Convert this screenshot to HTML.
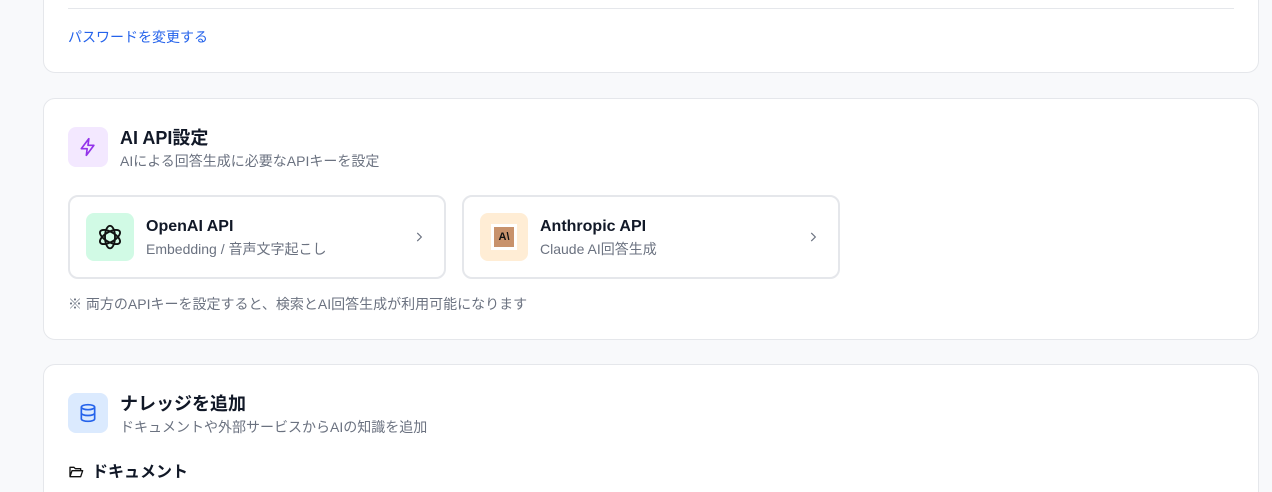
<!DOCTYPE html>
<html><head><meta charset="utf-8"><style>
*{box-sizing:border-box;margin:0;padding:0}
html,body{width:1272px;height:492px;overflow:hidden}
body{background:#f8f9fb;font-family:"Liberation Sans","Noto Sans CJK JP",sans-serif;color:#111827;position:relative}
.card{position:absolute;left:43px;width:1216px;background:#fff;border:1px solid #e5e7eb;border-radius:12px}
.abs{position:absolute}
.ibox{position:absolute;width:40px;height:40px;border-radius:8px;display:flex;align-items:center;justify-content:center}
.h{position:absolute;font-size:18px;font-weight:bold;line-height:22px}
.s{position:absolute;font-size:14px;color:#6b7280;line-height:17px}
.api{position:absolute;top:96px;width:378px;height:84px;border:2px solid #e5e7eb;border-radius:10px;background:#fff}
.api .ic{position:absolute;left:16px;top:16px;width:48px;height:48px;border-radius:8px;display:flex;align-items:center;justify-content:center}
.api .t{position:absolute;left:76px;top:20px;font-size:16px;font-weight:bold;line-height:20px}
.api .d{position:absolute;left:76px;top:44px;font-size:14px;color:#6b7280;line-height:17px}
.api .ch{position:absolute;right:18px;top:33px}
</style></head><body>
<div class="card" style="top:-40px;height:113px">
 <div class="abs" style="left:24px;top:47px;width:1166px;height:1px;background:#e5e7eb"></div>
 <div class="abs" style="left:24px;top:68px;font-size:14px;color:#2563eb;line-height:17px">パスワードを変更する</div>
</div>
<div class="card" style="top:98px;height:242px">
 <div class="ibox" style="left:24px;top:28px;background:#f3e8ff"><svg width="20" height="20" viewBox="0 0 24 24" fill="none" stroke="#9333ea" stroke-width="2" stroke-linejoin="round" stroke-linecap="round"><path d="M13 2 4 14h7l-1 8 9-12h-7z"/></svg></div>
 <div class="h" style="left:76px;top:28px">AI API設定</div>
 <div class="s" style="left:76px;top:54px">AIによる回答生成に必要なAPIキーを設定</div>
 <div class="api" style="left:24px">
  <div class="ic" style="background:#d1fae5"><svg width="30" height="30" viewBox="0 0 24 24" fill="none" stroke="#111" stroke-width="1.5"><g><ellipse cx="12" cy="12" rx="4" ry="9"/><ellipse cx="12" cy="12" rx="4" ry="9" transform="rotate(60 12 12)"/><ellipse cx="12" cy="12" rx="4" ry="9" transform="rotate(120 12 12)"/></g></svg></div>
  <div class="t">OpenAI API</div><div class="d">Embedding / 音声文字起こし</div>
  <svg class="ch" width="14" height="14" viewBox="0 0 24 24" fill="none" stroke="#6b7280" stroke-width="2"><path d="m9 5 7 7-7 7"/></svg>
 </div>
 <div class="api" style="left:418px">
  <div class="ic" style="background:#ffedd5"><div style="width:26px;height:26px;background:#fff;display:flex;align-items:center;justify-content:center"><div style="width:20px;height:20px;background:#c8926c;font-size:11px;font-weight:bold;color:#111;display:flex;align-items:center;justify-content:center">A\</div></div></div>
  <div class="t">Anthropic API</div><div class="d">Claude AI回答生成</div>
  <svg class="ch" width="14" height="14" viewBox="0 0 24 24" fill="none" stroke="#6b7280" stroke-width="2"><path d="m9 5 7 7-7 7"/></svg>
 </div>
 <div class="abs" style="left:24px;top:197px;font-size:14px;color:#6b7280;line-height:17px">※ 両方のAPIキーを設定すると、検索とAI回答生成が利用可能になります</div>
</div>
<div class="card" style="top:364px;height:128px;border-bottom:none;border-radius:12px 12px 0 0">
 <div class="ibox" style="left:24px;top:28px;background:#dbeafe"><svg width="20" height="20" viewBox="0 0 24 24" fill="none" stroke="#2563eb" stroke-width="2"><ellipse cx="12" cy="5" rx="8" ry="3"/><path d="M4 5v14c0 1.7 3.6 3 8 3s8-1.3 8-3V5M4 12c0 1.7 3.6 3 8 3s8-1.3 8-3"/></svg></div>
 <div class="h" style="left:76px;top:28px">ナレッジを追加</div>
 <div class="s" style="left:76px;top:54px">ドキュメントや外部サービスからAIの知識を追加</div>
 <svg class="abs" style="left:24px;top:99px" width="16" height="16" viewBox="0 0 24 24" fill="none" stroke="#111" stroke-width="2" stroke-linejoin="round"><path d="M3 19V5h6l2 2h8v3M3 19l3-9h16l-3 9z"/></svg>
 <div class="abs" style="left:48px;top:98px;font-size:16px;font-weight:bold;line-height:19px">ドキュメント</div>
</div>
</body></html>
